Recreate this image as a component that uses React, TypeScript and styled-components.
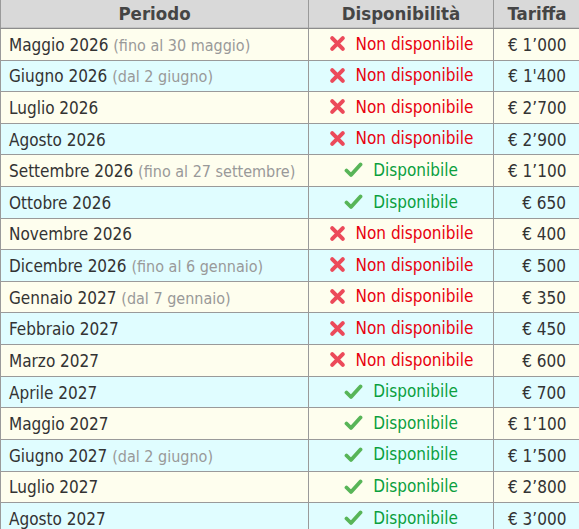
import React from "react";
import styled, { createGlobalStyle } from "styled-components";

const Global = createGlobalStyle`
  html, body { margin: 0; padding: 0; background: #ffffff; }
  body { font-family: "DejaVu Sans Condensed", "DejaVu Sans", Verdana, sans-serif; }
`;

const Table = styled.table`
  border-collapse: collapse;
  table-layout: fixed;
  width: 577px;
  font-size: 17px;
  color: #333333;
`;

const HeadCell = styled.th<{ $w: number }>`
  width: ${(p) => p.$w}px;
  height: 27px;
  padding: 0 0 1px;
  background: #d9d9d9;
  color: #454545;
  font-weight: bold;
  font-size: 18.5px;
  text-align: center;
  border-left: 1px solid #9a9a9a;
  border-right: 1px solid #9a9a9a;
  border-bottom: 1px solid #8c8c8c;
  box-shadow: inset 0 -1px 0 #c4c4c4;
`;

const Row = styled.tr<{ $alt: boolean }>`
  height: 31.62px;
  background: ${(p) => (p.$alt ? "#e0fdff" : "#fefeee")};
`;

const Cell = styled.td<{ $align: "left" | "center" | "right" }>`
  padding: 1px ${(p) => (p.$align === "right" ? "14px" : "8px")} 0;
  text-align: ${(p) => p.$align};
  border: 1px solid #9a9a9a;
  white-space: nowrap;
  vertical-align: middle;
`;

const Note = styled.span`
  color: #999999;
  font-size: 16px;
`;

const Status = styled.span<{ $ok: boolean }>`
  display: inline-flex;
  align-items: center;
  gap: ${(p) => (p.$ok ? "10px" : "10px")};
  color: ${(p) => (p.$ok ? "#0a9f3e" : "#e8000f")};
`;

const Cross = () => (
  <svg width="17" height="17" viewBox="0 0 16 16">
    <path
      d="M3 3 L13 13 M13 3 L3 13"
      stroke="#ec4a5a"
      strokeWidth="3.8"
      strokeLinecap="round"
    />
  </svg>
);

const Check = () => (
  <svg width="19" height="17" viewBox="0 0 19 17">
    <path
      d="M2.5 9.5 L7 14 L16.5 3.5"
      fill="none"
      stroke="#58b558"
      strokeWidth="3.8"
      strokeLinecap="round"
      strokeLinejoin="round"
    />
  </svg>
);

type R = { p: string; n?: string; ok: boolean; t: string };

const rows: R[] = [
  { p: "Maggio 2026", n: "(fino al 30 maggio)", ok: false, t: "€ 1’000" },
  { p: "Giugno 2026", n: "(dal 2 giugno)", ok: false, t: "€ 1'400" },
  { p: "Luglio 2026", ok: false, t: "€ 2’700" },
  { p: "Agosto 2026", ok: false, t: "€ 2’900" },
  { p: "Settembre 2026", n: "(fino al 27 settembre)", ok: true, t: "€ 1’100" },
  { p: "Ottobre 2026", ok: true, t: "€ 650" },
  { p: "Novembre 2026", ok: false, t: "€ 400" },
  { p: "Dicembre 2026", n: "(fino al 6 gennaio)", ok: false, t: "€ 500" },
  { p: "Gennaio 2027", n: "(dal 7 gennaio)", ok: false, t: "€ 350" },
  { p: "Febbraio 2027", ok: false, t: "€ 450" },
  { p: "Marzo 2027", ok: false, t: "€ 600" },
  { p: "Aprile 2027", ok: true, t: "€ 700" },
  { p: "Maggio 2027", ok: true, t: "€ 1’100" },
  { p: "Giugno 2027", n: "(dal 2 giugno)", ok: true, t: "€ 1’500" },
  { p: "Luglio 2027", ok: true, t: "€ 2’800" },
  { p: "Agosto 2027", ok: true, t: "€ 3’000" },
];

export default function App() {
  return (
    <>
      <Global />
      <Table>
        <thead>
          <tr>
            <HeadCell $w={307}>Periodo</HeadCell>
            <HeadCell $w={184}>Disponibilità</HeadCell>
            <HeadCell $w={86}>Tariffa</HeadCell>
          </tr>
        </thead>
        <tbody>
          {rows.map((r, i) => (
            <Row key={i} $alt={i % 2 === 1}>
              <Cell $align="left">
                {r.p} {r.n && <Note>{r.n}</Note>}
              </Cell>
              <Cell $align="center">
                <Status $ok={r.ok}>
                  {r.ok ? <Check /> : <Cross />}
                  {r.ok ? "Disponibile" : "Non disponibile"}
                </Status>
              </Cell>
              <Cell $align="right">{r.t}</Cell>
            </Row>
          ))}
        </tbody>
      </Table>
    </>
  );
}
